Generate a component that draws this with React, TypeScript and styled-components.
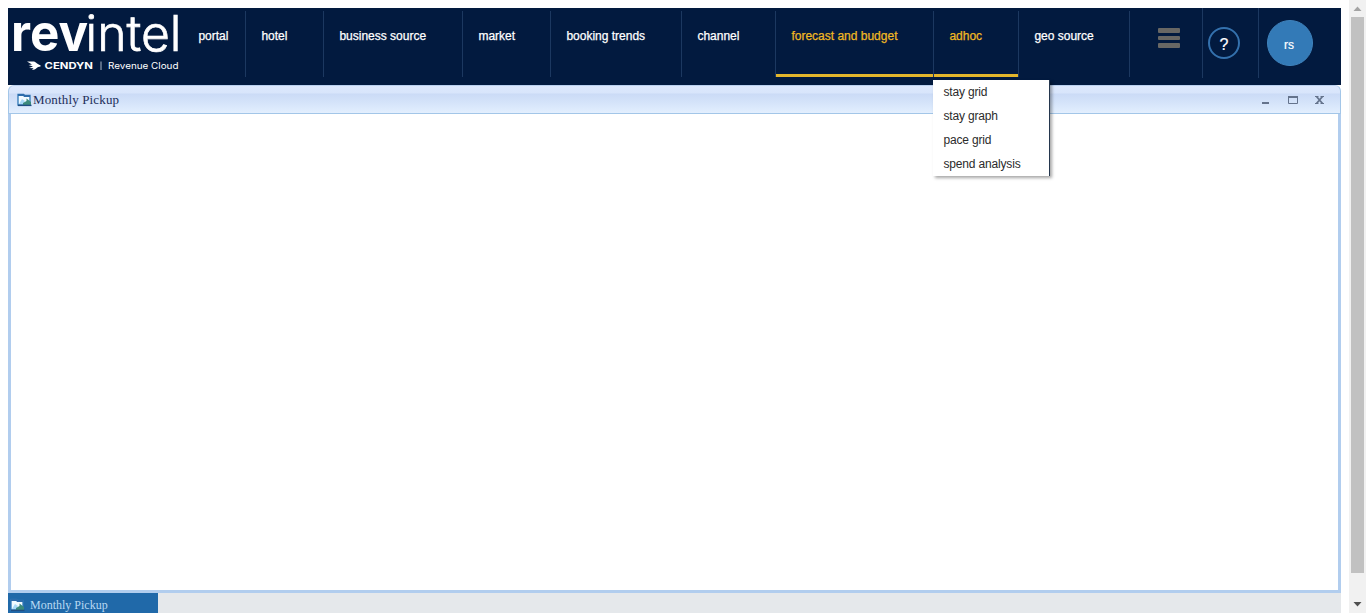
import React from 'react';
import styled, { createGlobalStyle } from 'styled-components';

const GlobalStyle = createGlobalStyle`
  * { box-sizing: border-box; }
  body { margin: 0; background: #fff; overflow: hidden; }
`;

const sans = '"Liberation Sans", Arial, sans-serif';
const serif = '"Liberation Serif", "Times New Roman", serif';

const Page = styled.div`
  display: flex;
  justify-content: space-between;
  height: 613px;
`;
const Main = styled.main`
  display: flex;
  flex-direction: column;
  width: 1333px;
  margin: 8px 0 0 8px;
`;
const Header = styled.header`
  display: flex;
  height: 77px;
  flex: none;
  background: #021a3f;
  font: 12px ${sans};
  color: #fff;
`;
const Logo = styled.svg`
  display: block;
  width: 175px;
  height: 77px;
  flex: none;
  overflow: visible;
`;
const Nav = styled.nav`
  display: flex;
  height: 66px;
  margin-top: 3px;
`;
const NavItem = styled.div<{ $width: number; $active?: boolean }>`
  position: relative;
  width: ${p => p.$width}px;
  height: 66px;
  padding: 18px 0 0 15.4px;
  line-height: 14px;
  white-space: nowrap;
  color: ${p => (p.$active ? '#f0b823' : '#fff')};
  border-right: 1px solid #1c3860;
  -webkit-text-stroke: 0.25px currentColor;
  background: ${p => (p.$active ? 'linear-gradient(#e3b62c, #e3b62c) 0 100% / 100% 3px no-repeat' : 'none')};
`;
const Menu = styled.div`
  position: absolute;
  left: -1px;
  top: 69px;
  z-index: 2;
  width: 117px;
  height: 96px;
  background: #fff;
  border-right: 1px solid #24364d;
  box-shadow: 2px 2px 3px rgba(0, 0, 0, 0.35);
  -webkit-text-stroke: 0;
  letter-spacing: -0.17px;
`;
const MenuItem = styled.div`
  height: 24px;
  padding-left: 10.5px;
  line-height: 24px;
  color: #2b2b2b;
`;
const Tool = styled.div<{ $width: number; $pad: string; $line?: boolean }>`
  width: ${p => p.$width}px;
  height: 70px;
  padding: ${p => p.$pad};
  border-right: ${p => (p.$line ? '1px solid #1c3860' : 'none')};
`;
const Burger = styled.div`
  display: flex;
  flex-direction: column;
  gap: 3px;
`;
const BurgerBar = styled.span`
  width: 22px;
  height: 4.6px;
  border-radius: 1px;
  background: #686764;
`;
const Help = styled.div`
  width: 32px;
  height: 32px;
  border: 2px solid #3471ad;
  border-radius: 50%;
  font-size: 16px;
  line-height: 31px;
  text-align: center;
  -webkit-text-stroke: 0.2px #fff;
`;
const Avatar = styled.div`
  width: 46px;
  height: 46px;
  border: 1px solid #3f83bd;
  border-radius: 50%;
  background: #337ab7;
  line-height: 48px;
  padding-right: 2px;
  text-align: center;
  -webkit-text-stroke: 0.2px #fff;
`;
const Window = styled.section`
  display: flex;
  flex-direction: column;
  height: 508px;
  flex: none;
`;
const TitleBar = styled.div`
  display: flex;
  align-items: center;
  height: 29px;
  padding: 0 15px 0 8px;
  border: 1px solid #a3c6e8;
  border-top-color: #b9d0ef;
  border-radius: 6px 6px 0 0;
  background: linear-gradient(#dce8fd 0, #d8e5fb 7px, #cbdbf6 8px, #d5e4fa 17px, #e3effe 27px);
  font: 13px ${serif};
  letter-spacing: 0.15px;
  color: #222e59;
`;
const Title = styled.span`
  flex: 1;
  padding: 1px 0 0 1px;
`;
const WindowIcon = styled.svg`
  display: block;
  width: 15px;
  height: 14px;
  flex: none;
`;
const Controls = styled.svg`
  display: block;
  width: 64px;
  height: 12px;
`;
const WindowBody = styled.div`
  flex: 1;
  border: 3px solid #b1cdee;
  border-top: 0;
  background: #fff;
`;
const TaskBar = styled.footer`
  display: flex;
  height: 20px;
  background: #e5e8eb;
  overflow: hidden;
`;
const Task = styled.div`
  display: flex;
  align-items: flex-start;
  gap: 5px;
  width: 150px;
  height: 20px;
  padding: 5px 0 0 2px;
  background: #2069a9;
  color: #b9d9f3;
  font: 12px/15px ${serif};
`;
const ScrollBar = styled.aside`
  display: flex;
  flex-direction: column;
  align-items: center;
  width: 17px;
  height: 613px;
  padding-right: 1px;
  background: #f1f1f1;
`;
const Arrow = styled.svg`
  display: block;
  width: 15px;
  height: 17px;
`;
const Thumb = styled.div`
  width: 13px;
  height: 556px;
  margin-bottom: auto;
  background: #c1c1c1;
`;

const links = [
  { label: 'portal', width: 63 },
  { label: 'hotel', width: 78 },
  { label: 'business source', width: 139 },
  { label: 'market', width: 88 },
  { label: 'booking trends', width: 131 },
  { label: 'channel', width: 94 },
  { label: 'forecast and budget', width: 158, active: true },
  { label: 'adhoc', width: 85, active: true, items: ['stay grid', 'stay graph', 'pace grid', 'spend analysis'] },
  { label: 'geo source', width: 111 },
];

function PictureIcon() {
  return (
    <WindowIcon viewBox="0 0 15 14">
      <path d="M1 1.500h5.500l1 1H13V12H1z" fill="#f1faff" stroke="#2f78b8" strokeWidth="1.300" />
      <path d="M1 2h5.500l1 1H13" fill="none" stroke="#2d6cab" strokeWidth="1.800" />
      <path d="M2 11l3-5 3 2-2 3z" fill="#a8d9f7" />
      <path d="M6 10l3.500-2V5.500L14 9v3.500H6z" fill="#3b8a7c" />
      <path d="M1 12.400h13.500" stroke="#1f4e82" strokeWidth="1.400" />
    </WindowIcon>
  );
}

function Brand() {
  return (
    <Logo viewBox="0 0 175 77" fill="#fff" fontFamily="Inter, sans-serif">
      <text x="3" y="43" fontSize="51" fontWeight="700" textLength="77" lengthAdjust="spacingAndGlyphs">rev</text>
      <text x="77.500" y="43" fontSize="49" fontWeight="300" textLength="96" lengthAdjust="spacingAndGlyphs" stroke="#fff" strokeWidth="0.700">intel</text>
      <path d="M19 53.500h6c2.500 0 3.500 2.200 7.500 3.800v1.200c-3.500 0-4.500 3.500-8.500 3.500l1.500-1.700-4.500-.2 4-1.600-4.500-1.500 3.500-.5z" />
      <text x="36.500" y="61" fontSize="9" fontWeight="700" textLength="48.500" lengthAdjust="spacingAndGlyphs">CENDYN</text>
      <path d="M93 53.500v8.500" stroke="#aeb9c9" strokeWidth="1" />
      <text x="100" y="61" fontSize="9" textLength="70.500" lengthAdjust="spacingAndGlyphs">Revenue Cloud</text>
    </Logo>
  );
}

export default function App() {
  return (
    <>
      <GlobalStyle />
      <Page>
        <Main>
          <Header>
            <Brand />
            <Nav>
              {links.map(link => (
                <NavItem key={link.label} $width={link.width} $active={link.active}>
                  {link.label}
                  {link.items && (
                    <Menu>
                      {link.items.map(item => <MenuItem key={item}>{item}</MenuItem>)}
                    </Menu>
                  )}
                </NavItem>
              ))}
            </Nav>
            <Tool $width={73} $pad="20px 0 0 28px" $line>
              <Burger><BurgerBar /><BurgerBar /><BurgerBar /></Burger>
            </Tool>
            <Tool $width={56} $pad="19px 0 0 5px" $line><Help>?</Help></Tool>
            <Tool $width={82} $pad="12px 0 0 8px"><Avatar>rs</Avatar></Tool>
          </Header>
          <Window>
            <TitleBar>
              <PictureIcon />
              <Title>Monthly Pickup</Title>
              <Controls viewBox="0 0 64 12" fill="none" stroke="#64738c">
                <path d="M1 9h7" strokeWidth="2" />
                <path d="M27.500 3v6.500h9V3" />
                <path d="M27 3h10" strokeWidth="2" />
                <path d="M55.500 2.500l6 7m0-7l-6 7" strokeWidth="1.800" />
                <path d="M54 2.500h3.500m2 0H63M54 9.500h3.500m2 0H63" />
              </Controls>
            </TitleBar>
            <WindowBody />
          </Window>
          <TaskBar><Task><PictureIcon />Monthly Pickup</Task></TaskBar>
        </Main>
        <ScrollBar>
          <Arrow viewBox="0 0 15 17"><path d="M3.500 11L7.500 6.500l4 4.500z" fill="#a3a3a3" /></Arrow>
          <Thumb />
          <Arrow viewBox="0 0 15 17"><path d="M3.500 6h8l-4 4.500z" fill="#505050" /></Arrow>
        </ScrollBar>
      </Page>
    </>
  );
}
